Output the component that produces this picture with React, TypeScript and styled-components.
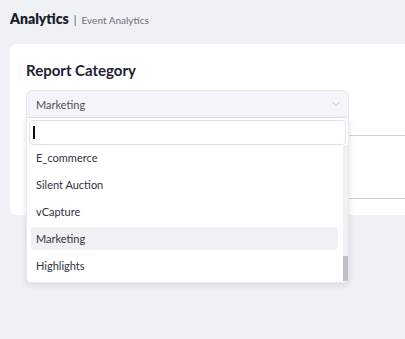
import styled, { createGlobalStyle } from 'styled-components';
import { ChevronDown } from 'lucide-react';

const GlobalStyle = createGlobalStyle`
  html, body {
    margin: 0;
    padding: 0;
    background: #f0f1f5;
    font-family: Lato, 'Open Sans', sans-serif;
    overflow: hidden;
  }
`;

const options = ['E_commerce', 'Silent Auction', 'vCapture', 'Marketing', 'Highlights'];
const selected = 'Marketing';

export default function App() {
  return (
    <>
      <GlobalStyle />
      <Page>
        <Header>
          <PageTitle>Analytics</PageTitle>
          <Divider>|</Divider>
          <SubTitle>Event Analytics</SubTitle>
        </Header>
        <Card>
          <CardTitle>Report Category</CardTitle>
          <SelectWrap>
            <Trigger>
              <TriggerValue>{selected}</TriggerValue>
              <ChevronDown size={12} strokeWidth={1.6} color="#a3a8b3" />
            </Trigger>
            <Dropdown>
              <Search>
                <Caret />
              </Search>
              <ListArea>
                <List>
                  {options.map((opt) => (
                    <Option key={opt} $active={opt === selected}>
                      {opt}
                    </Option>
                  ))}
                </List>
                <ScrollTrack>
                  <ScrollThumb />
                </ScrollTrack>
              </ListArea>
            </Dropdown>
          </SelectWrap>
          <FieldRow $height={17} />
          <FieldRow $height={62} />
        </Card>
      </Page>
    </>
  );
}

const Page = styled.div`
  padding: 10px 0 0 10px;
  width: 100vw;
  height: 339px;
  box-sizing: border-box;
  overflow: hidden;
`;

const Header = styled.div`
  display: flex;
  align-items: baseline;
  gap: 5px;
  height: 18px;
  line-height: 18px;
  margin-bottom: 16px;
`;

const PageTitle = styled.span`
  font-size: 14px;
  font-weight: 800;
  color: #1a1e2b;
`;

const Divider = styled.span`
  font-size: 11px;
  color: #555a66;
`;

const SubTitle = styled.span`
  font-size: 10px;
  color: #6b7080;
`;

const Card = styled.div`
  width: 430px;
  background: #ffffff;
  border-radius: 6px;
  padding: 16px;
  box-sizing: border-box;
`;

const CardTitle = styled.div`
  font-size: 15px;
  font-weight: 700;
  color: #1e2230;
  line-height: 20px;
  margin-bottom: 10px;
`;

const SelectWrap = styled.div`
  position: relative;
  width: 323px;
`;

const Trigger = styled.div`
  height: 28px;
  box-sizing: border-box;
  display: flex;
  align-items: center;
  justify-content: space-between;
  padding: 0 6px 0 9px;
  background: #f4f5f8;
  border: 1px solid #e6e8ed;
  border-radius: 6px 6px 0 0;
`;

const TriggerValue = styled.span`
  font-size: 11px;
  color: #4b505c;
`;

const Dropdown = styled.div`
  position: absolute;
  top: 28px;
  left: 0;
  width: 323px;
  height: 165px;
  box-sizing: border-box;
  background: #ffffff;
  border: 1px solid #e6e8ed;
  border-top: none;
  border-radius: 0 0 5px 5px;
  box-shadow: 0 2px 6px rgba(30, 35, 50, 0.12);
  display: flex;
  flex-direction: column;
  z-index: 2;
`;

const Search = styled.div`
  margin: 2px 2px 0 2px;
  height: 25px;
  box-sizing: border-box;
  border: 1px solid #dfe1e7;
  border-radius: 4px;
  display: flex;
  align-items: center;
  padding-left: 3px;
`;

const Caret = styled.span`
  display: block;
  width: 2px;
  height: 13px;
  background: #111111;
`;

const ListArea = styled.div`
  flex: 1;
  display: flex;
  min-height: 0;
`;

const List = styled.div`
  flex: 1;
  display: flex;
  flex-direction: column;
  gap: 4px;
  padding: 1px 5px 0 4px;
`;

const Option = styled.div<{ $active?: boolean }>`
  height: 23px;
  display: flex;
  align-items: center;
  padding-left: 5px;
  border-radius: 4px;
  font-size: 11px;
  color: #2f3340;
  background: ${(p) => (p.$active ? '#f0f1f5' : 'transparent')};
`;

const ScrollTrack = styled.div`
  width: 5px;
  background: #f1f1f1;
  display: flex;
  flex-direction: column;
  justify-content: flex-end;
  padding-bottom: 1px;
`;

const ScrollThumb = styled.div`
  height: 25px;
  background: #c1c1c1;
`;

const FieldRow = styled.div<{ $height: number }>`
  height: ${(p) => p.$height}px;
  border-bottom: 1px solid #cfd2d8;
`;
